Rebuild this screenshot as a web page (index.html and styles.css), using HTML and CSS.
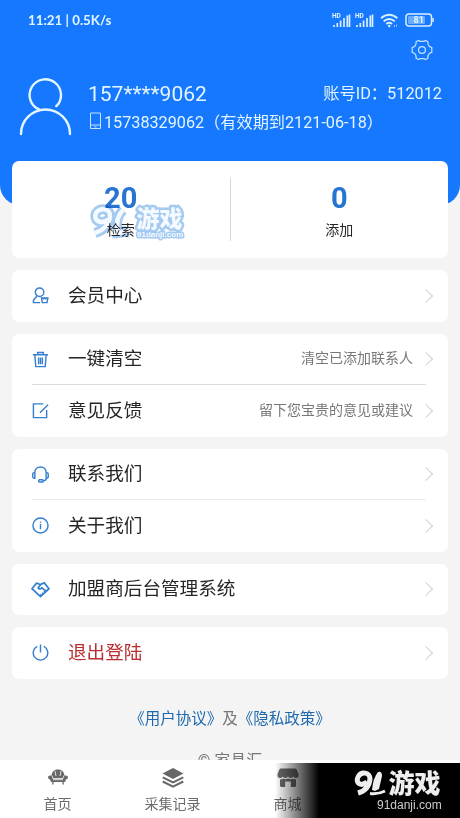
FILE: index.html
```html
<!DOCTYPE html>
<html lang="zh-CN">
<head>
<meta charset="utf-8">
<title>我的</title>
<link rel="stylesheet" href="styles.css">
</head>
<body>
<main class="page">
  <header class="hero">
    <div class="status">
      <span class="clock">11:21 | 0.5K/s</span>
      <span class="signals">
        <svg class="signal" width="19" height="15" viewBox="0 0 19 15"><text x="0" y="5.4" class="hd">HD</text><path d="M2 14v-2M5.3 14v-4M8.6 14V7.500M12 14V5M15.300 14V2.500M17.500 14V1.500" /></svg>
        <svg class="signal" width="19" height="15" viewBox="0 0 19 15"><text x="0" y="5.4" class="hd">HD</text><path d="M2 14v-2M5.3 14v-4M8.6 14V7.500M12 14V5M15.300 14V2.500M17.500 14V1.500" /></svg>
        <svg class="wifi" width="19" height="15" viewBox="0 0 19 15"><path d="M1 5.200q8.200-7 16.400 0M3.600 8.300q5.600-4.700 11.200 0M6.300 11q2.900-2.400 5.800 0"/><circle cx="9.200" cy="13" r="1.300"/><path class="thin" d="M14.500 12v2M16.500 11.500v2"/></svg>
        <svg class="battery" width="30" height="14" viewBox="0 0 30 14"><rect x="1" y="1" width="25.500" height="12" rx="3"/><rect class="charge" x="3" y="3" width="17" height="8" rx="1"/><path d="M28 5v4"/><text x="13.700" y="10.400">81</text></svg>
      </span>
    </div>
    <div class="tools">
      <svg width="22" height="22" viewBox="0 0 22 22"><path d="M7.300 1.400q1.200.9 2.500.9h2.400q1.300 0 2.500-.9l2.200 1.300q-.3 2.800 1.100 4.300.9 1 2.800 1.500v4.900q-1.900.5-2.800 1.500-1.400 1.500-1.100 4.400l-2.200 1.300q-1.200-1-2.500-1H9.800q-1.300 0-2.500 1l-2.200-1.300q.3-2.900-1.100-4.400-.9-1-2.800-1.500V8.500Q3.100 8 4 7q1.400-1.500 1.100-4.300z"/><circle cx="11" cy="11" r="3.400"/></svg>
    </div>
    <div class="profile">
      <svg class="avatar" width="54" height="60" viewBox="0 0 54 60"><path d="M37.300 28.200A15.700 15.700 0 1 0 20 31.400M2 56a24.500 24.500 0 0 1 49 0"/></svg>
      <div class="identity">
        <div class="line"><span class="name">157****9062</span><span class="account">账号ID：512012</span></div>
        <div class="phone"><svg width="13" height="18" viewBox="0 0 13 18"><path d="M1.500 1h10v15.500h-10zM1.500 13h10M5.300 14.800h2.200"/></svg><span>15738329062（有效期到2121-06-18）</span></div>
      </div>
    </div>
  </header>

  <section class="card stats">
    <div class="stat"><b>20</b><span>检索</span></div>
    <div class="stat"><b>0</b><span>添加</span></div>
    <div class="stamp">
      <svg width="104" height="42" viewBox="0 0 104 42">
        <path class="halo" d="M21 20C13 25 6 20 9 13c3-6 15-5 14 4q-2 12-15 16M36 10c-6 6-7 13-5 21M26 33q8 1 15-3"/>
        <path class="face" d="M21 20C13 25 6 20 9 13c3-6 15-5 14 4q-2 12-15 16M36 10c-6 6-7 13-5 21M26 33q8 1 15-3"/>
        <text class="brand" x="49.500" y="26.500">游戏</text><text class="site" x="50" y="37">91danji.com</text>
      </svg>
    </div>
  </section>

  <section class="card">
    <div class="row"><svg class="icon" viewBox="0 0 18 18"><circle cx="8" cy="5.500" r="4.500"/><path d="M5 9.800 1.500 14v2.500h7M10 11.500h6.800l-.9 5h-5zM11.500 13l1.900-1.400 1.900 1.400"/></svg><span class="label">会员中心</span><i class="arrow"></i></div>
  </section>

  <section class="card">
    <div class="row"><svg class="icon" viewBox="0 0 18 18"><path d="M1 4h16M6 3.800V1.500h6v2.300M3 4.500l1 12h10l1-12M7 7v7M9 7v7M11 7v7"/></svg><span class="label">一键清空</span><span class="note">清空已添加联系人</span><i class="arrow"></i></div>
    <div class="row"><svg class="icon" viewBox="0 0 18 18"><path d="M12 2H1.500v14.500h14V8.500M8.500 11.500 17 3"/></svg><span class="label">意见反馈</span><span class="note">留下您宝贵的意见或建议</span><i class="arrow"></i></div>
  </section>

  <section class="card">
    <div class="row light"><svg class="icon" viewBox="0 0 18 18"><path d="M3 7C3-1 15-1 15 7M3 7v6H2.200Q.8 13 .8 11.500v-3Q.8 7 2.200 7zM15 7v6h.8q1.400 0 1.400-1.500v-3Q17.200 7 15.800 7zM15 13q0 2.700-3.500 2.700"/><rect x="7" y="14.500" width="5" height="2.500" rx="1.200"/></svg><span class="label">联系我们</span><i class="arrow"></i></div>
    <div class="row"><svg class="icon" viewBox="0 0 18 18"><circle cx="9" cy="9" r="8"/><path d="M9 7.500V13M9 4.800v1.300"/></svg><span class="label">关于我们</span><i class="arrow"></i></div>
  </section>

  <section class="card">
    <div class="row"><svg class="icon wide" viewBox="0 0 20 18"><path d="M6 2 1 8.200l9 8.300 9-8.300L14 2l-3.500 1.500L7.500 7.500q1.600 2 4-.3l4.800 4M6 2l3.500 1.800"/><path class="dots" d="m10 15.500 6.500-5.500"/></svg><span class="label">加盟商后台管理系统</span><i class="arrow"></i></div>
  </section>

  <section class="card">
    <div class="row"><svg class="icon" viewBox="0 0 18 18"><path d="M5.500 2.500a7.700 7.700 0 1 0 7 0M9 .5V9"/></svg><span class="label danger">退出登陆</span><i class="arrow"></i></div>
  </section>

  <p class="legal"><a>《用户协议》</a>及<a>《隐私政策》</a></p>
  <p class="copyright">© 家具汇</p>
</main>

<nav class="tabs">
  <div class="tab"><svg width="22" height="20" viewBox="0 0 22 20"><path d="M4.500 7.500C5 3 8 1.500 11 1.500s6 1.500 6.500 6q3.500-.6 3.500 1.800 0 1.700-2 2.200l-1 2.500H4l-1-2.500q-2-.5-2-2.200 0-2.400 3.500-1.800zM5.500 14h1.300l-.5 2.500H5zM15.200 14h1.300l.5 2.500h-1.300z"/><path class="cut" d="m8 3 1 5M14 3l-1 5M5 7.500l1 3h10l1-3M6 11.700h10"/></svg><span>首页</span></div>
  <div class="tab"><svg width="22" height="20" viewBox="0 0 22 20"><path d="M11 0 21.500 5.500 11 11 .5 5.500z"/><path class="layer" d="m.7 9.300 10.300 5.200 10.300-5.200M.7 13.500 11 18.700l10.300-5.200"/></svg><span>采集记录</span></div>
  <div class="tab"><svg width="22" height="20" viewBox="0 0 22 20"><path d="M4 .5h14q1.200 0 1.700 1L21.500 6v1.500q0 2.500-2.500 2.500-2 0-2.700-1.500Q15.300 10 13.600 10T11 8.500Q10 10 8.300 10T5.700 8.500Q5 10 3 10 .5 10 .5 7.500V6l1.800-4.500q.5-1 1.700-1zM3 11.200q2 .3 3-.8 2.500 1.500 5 0 2.500 1.500 5 0 1 1.100 3 .8v6.300q0 1.500-1.500 1.500h-3.700v-5.500H8.200V19H4.500Q3 19 3 17.500z"/></svg><span>商城</span></div>
  <div class="tab"></div>
</nav>

<aside class="mark">
  <svg width="185" height="55" viewBox="0 0 185 55"><path class="nine" d="M92 19C86 24 80 20 83 14c3-6 12-5 12 2q-1 11-12 14"/><path class="one" d="M103 9q4-1 4 4l-3 13-4 2-3-1q1-12 6-18z"/><path class="base" d="M95 30.500q8 1 15-2.500"/><text class="brand" x="113.500" y="29.500">游戏</text><text class="site" x="102" y="46">91danji.com</text></svg>
</aside>
</body>
</html>
```
FILE: styles.css
```css
* { box-sizing: border-box; }

body {
  margin: 0;
  width: 460px;
  height: 818px;
  overflow: hidden;
  position: relative;
  background: #f4f4f4;
  color: #262626;
  font-family: Roboto, "Noto Sans CJK SC", sans-serif;
}

svg { display: block; flex: none; fill: none; }
p { margin: 0; }

.page { height: 760px; overflow: hidden; }

.hero {
  height: 205px;
  margin-bottom: -44px;
  background: #1677ff;
  border-radius: 0 0 20px 20px;
  color: #e3f6ff;
}

.status {
  display: flex;
  justify-content: space-between;
  align-items: center;
  height: 39px;
  padding: 1px 25px 0 28px;
}
.clock { font: bold 13.300px/20px Lato, sans-serif; }
.signals { display: flex; align-items: center; gap: 4px; stroke: #d7efff; }
.signals text { fill: #e3f6ff; stroke: none; font-family: Roboto, sans-serif; font-weight: bold; }
.hd { font-size: 6.500px; }
.signal path { stroke-width: 1.700; }
.wifi { stroke-width: 1.800; margin-left: 2px; }
.wifi circle { fill: #d7efff; stroke: none; }
.wifi .thin { stroke-width: 1; opacity: .7; }
.battery { stroke-width: 1.500; margin-left: 2px; }
.battery .charge { fill: #68abff; stroke: none; }
.battery text { font-size: 9px; text-anchor: middle; }

.tools { display: flex; justify-content: flex-end; padding-right: 27px; }
.tools svg { stroke: #c6e6ff; stroke-width: 1.200; }

.profile { display: flex; align-items: flex-start; padding: 17px 18px 0 19px; }
.avatar { stroke: #e3f6ff; stroke-width: 2.400; stroke-linecap: round; }
.identity { flex: 1; padding-left: 15px; }
.line { display: flex; justify-content: space-between; align-items: center; height: 31px; }
.name { font-size: 21px; }
.account { font-size: 16.300px; line-height: 24px; margin-top: 1px; white-space: nowrap; }
.phone { display: flex; align-items: center; height: 24px; font-size: 16.200px; white-space: nowrap; }
.phone svg { margin: 0 2px 0 1px; stroke: #c6e6ff; stroke-width: 1; }

.card { margin: 0 12px 12px; background: #fff; border-radius: 7px; }

.stats { position: relative; display: flex; height: 97px; padding: 17px 0; }
.stat { flex: 1; display: flex; flex-direction: column; align-items: center; }
.stat:first-child { border-right: 1px solid #d9d9d9; }
.stat b { font-size: 29px; line-height: 41px; color: #2875d1; }
.stat span { font-size: 14px; line-height: 22px; }

.stamp { position: absolute; left: 75px; top: 39px; opacity: .85; mix-blend-mode: multiply; }
.stamp text { fill: #f2f9ff; stroke: #94c1ee; stroke-width: 5; stroke-linejoin: round; paint-order: stroke; }
.stamp .brand { font: 900 23px "Noto Sans CJK SC", sans-serif; }
.stamp .site { font: bold 8px "Liberation Sans", sans-serif; stroke-width: 3; }
.halo { stroke: #94c1ee; stroke-width: 10; stroke-linejoin: round; }
.face { stroke: #f2f9ff; stroke-width: 4.500; }

.row { position: relative; display: flex; align-items: center; height: 51.500px; padding: 0 14px 0 20px; }
.row + .row::before { content: ""; position: absolute; top: -1px; left: 20px; right: 22px; height: 1px; background: #dcdcdc; }
.light + .row::before { background: #ebebeb; }
.icon { width: 17px; height: 17px; margin-right: 19px; stroke: #347fcf; stroke-width: 1.500; }
.wide { width: 19px; margin: 0 18px 0 -1px; stroke-width: 1.800; }
.dots { stroke-dasharray: 1.500 1; stroke-width: 2.500; }
.label { flex: 1; font-size: 18.600px; line-height: 28px; white-space: nowrap; }
.danger { color: #b92e30; }
.note { margin-right: 11px; font-size: 14px; line-height: 20px; margin-top: -2px; color: #777; }
.arrow { width: 10px; height: 10px; border: solid #d2d2d2; border-width: 1.300px 1.300px 0 0; transform: translateX(-3px) rotate(45deg); }

.legal { padding-top: 15px; text-align: center; font-size: 15.500px; line-height: 26px; color: #777; }
.legal a { color: #1e69ad; }
.copyright { margin-top: 16px; text-align: center; font-size: 16px; line-height: 26px; color: #777; }

.tabs { display: flex; height: 58px; background: #fff; }
.tab { flex: 1; display: flex; flex-direction: column; align-items: center; padding-top: 8px; font-size: 14px; line-height: 20px; color: #6b6b6b; }
.tab svg { fill: #686868; }
.tab span { margin-top: 6px; }
.tab .cut { fill: none; stroke: #fff; stroke-width: .8; }
.tab .layer { fill: none; stroke: #686868; stroke-width: 2; }

.mark {
  position: absolute;
  left: 275px;
  bottom: 0;
  width: 185px;
  height: 55px;
  background: linear-gradient(90deg, transparent, #000 44px);
}
.mark .nine { stroke: #eee; stroke-width: 5; }
.mark .one { fill: #eee; }
.mark .base { stroke: #eee; stroke-width: 3; }
.mark .brand { fill: #eee; font: 900 26px "Noto Sans CJK SC", sans-serif; }
.mark .site { fill: #ccc; font: 12px "Liberation Sans", sans-serif; }
```
